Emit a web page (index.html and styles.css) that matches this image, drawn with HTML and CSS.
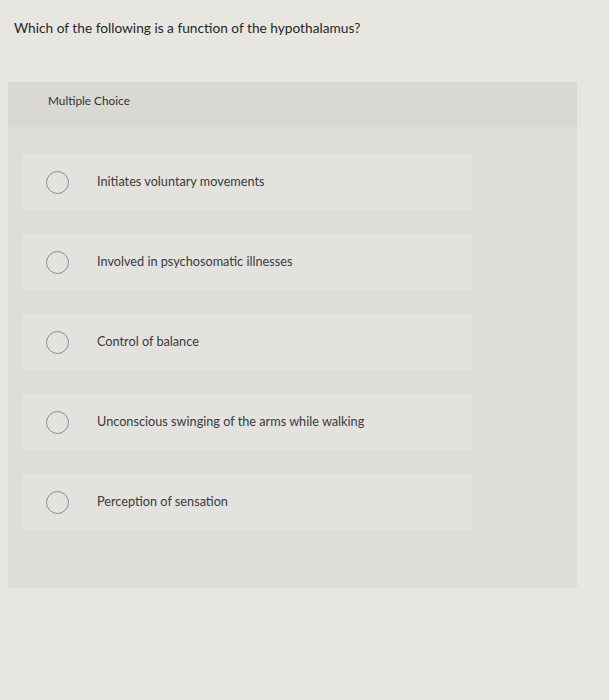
FILE: index.html
```html
<!DOCTYPE html>
<html lang="en">
<head>
<meta charset="utf-8">
<title>Question</title>
<link rel="stylesheet" href="styles.css">
</head>
<body>
<p class="question">Which of the following is a function of the hypothalamus?</p>
<section class="panel">
  <div class="panel-head">Multiple Choice</div>
  <div class="options">
    <label class="option"><span class="radio"></span><span class="label">Initiates voluntary movements</span></label>
    <label class="option"><span class="radio"></span><span class="label">Involved in psychosomatic illnesses</span></label>
    <label class="option"><span class="radio"></span><span class="label">Control of balance</span></label>
    <label class="option"><span class="radio"></span><span class="label">Unconscious swinging of the arms while walking</span></label>
    <label class="option"><span class="radio"></span><span class="label">Perception of sensation</span></label>
  </div>
</section>
</body>
</html>
```
FILE: styles.css
```css
html, body {
  margin: 0;
  padding: 0;
}
body {
  background: #e7e6e1;
  font-family: Lato, "Open Sans", Arial, sans-serif;
  color: #2b2b2b;
  height: 700px;
}
.question {
  margin: 0;
  padding: 20px 14px 0 14px;
  font-size: 13.7px;
  line-height: 16px;
  height: 62px;
  color: #262626;
}
.panel {
  margin: 0 32px 0 8px;
  background: #dddcd8;
}
.panel-head {
  height: 44px;
  box-sizing: border-box;
  padding: 12px 0 0 40px;
  font-size: 11.8px;
  line-height: 14px;
  color: #333;
  background: #d9d8d4;
}
.options {
  display: flex;
  flex-direction: column;
  gap: 24px;
  padding: 28px 105px 58px 14px;
}
.option {
  height: 56px;
  display: flex;
  align-items: center;
  padding-left: 24px;
  background: #e3e2de;
}
.radio {
  width: 21px;
  height: 21px;
  border: 1.4px solid #8c8c8e;
  border-radius: 50%;
  flex: none;
}
.label {
  margin-left: 28px;
  font-size: 12.7px;
  line-height: 14px;
  color: #3a3a3a;
  position: relative;
  top: -1px;
}
```
